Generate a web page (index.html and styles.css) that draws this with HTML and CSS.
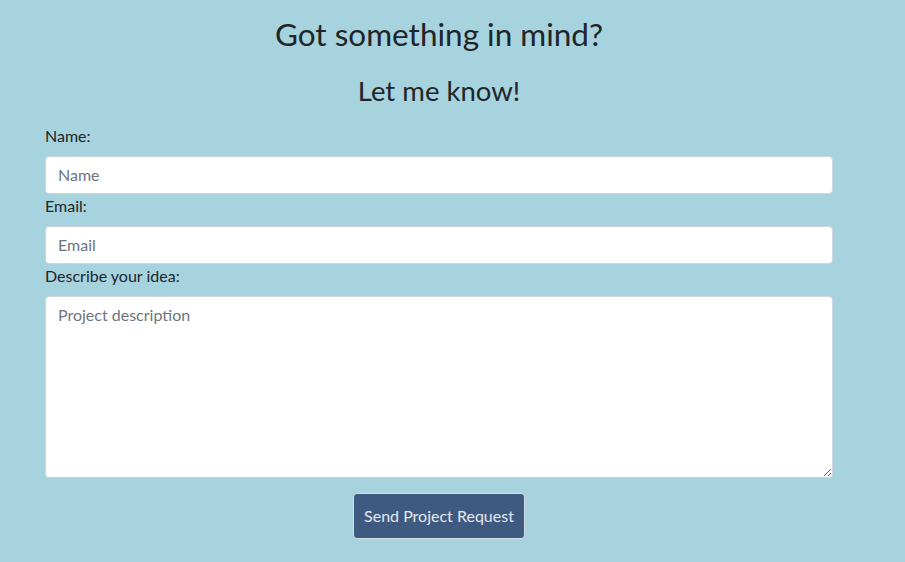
FILE: index.html
```html
<!DOCTYPE html>
<html lang="en">
<head>
<meta charset="utf-8">
<title>Contact</title>
<link rel="stylesheet" href="styles.css">
</head>
<body>
<section class="contact">
  <h1 class="title">Got something in mind?</h1>
  <h2 class="subtitle">Let me know!</h2>
  <form class="form">
    <label class="label" for="name">Name:</label>
    <input class="control" id="name" type="text" placeholder="Name">
    <label class="label" for="email">Email:</label>
    <input class="control" id="email" type="email" placeholder="Email">
    <label class="label" for="idea">Describe your idea:</label>
    <textarea class="control area" id="idea" placeholder="Project description"></textarea>
    <div class="actions">
      <button class="btn" type="button">Send Project Request</button>
    </div>
  </form>
</section>
</body>
</html>
```

FILE: styles.css
```css
* { box-sizing: border-box; }
html, body { height: 100%; }
body {
  margin: 0;
  background: #a6d3de;
  font-family: Lato, "Open Sans", sans-serif;
  color: #212529;
  font-size: 16px;
  line-height: 1.5;
}
.contact {
  width: 788px;
  margin-left: 45px;
  padding-top: 16px;
}
.title {
  margin: 0;
  text-align: center;
  font-weight: 400;
  font-size: 31.5px;
  line-height: 1.2;
}
.subtitle {
  margin: 20px 0 0;
  text-align: center;
  font-weight: 400;
  font-size: 27.5px;
  line-height: 1.2;
}
.form {
  display: flex;
  flex-direction: column;
  margin-top: 17px;
}
.label {
  display: block;
  margin-bottom: 8px;
}
.control {
  display: block;
  width: 100%;
  height: 38px;
  padding: 6px 12px;
  font-family: inherit;
  font-size: 16px;
  line-height: 1.5;
  color: #495057;
  background: #fff;
  border: 1px solid #ced4da;
  border-radius: 4px;
}
.control::placeholder { color: #6c757d; opacity: 1; }
.area {
  height: 182px;
  resize: vertical;
}
.actions {
  display: flex;
  justify-content: center;
  margin-top: 15px;
}
.btn {
  font-family: inherit;
  font-size: 16px;
  line-height: 24px;
  padding: 10px 10px;
  color: #e3e9f1;
  background: #3f5a80;
  border: 1px solid #d6dee6;
  border-radius: 4px;
}
```
